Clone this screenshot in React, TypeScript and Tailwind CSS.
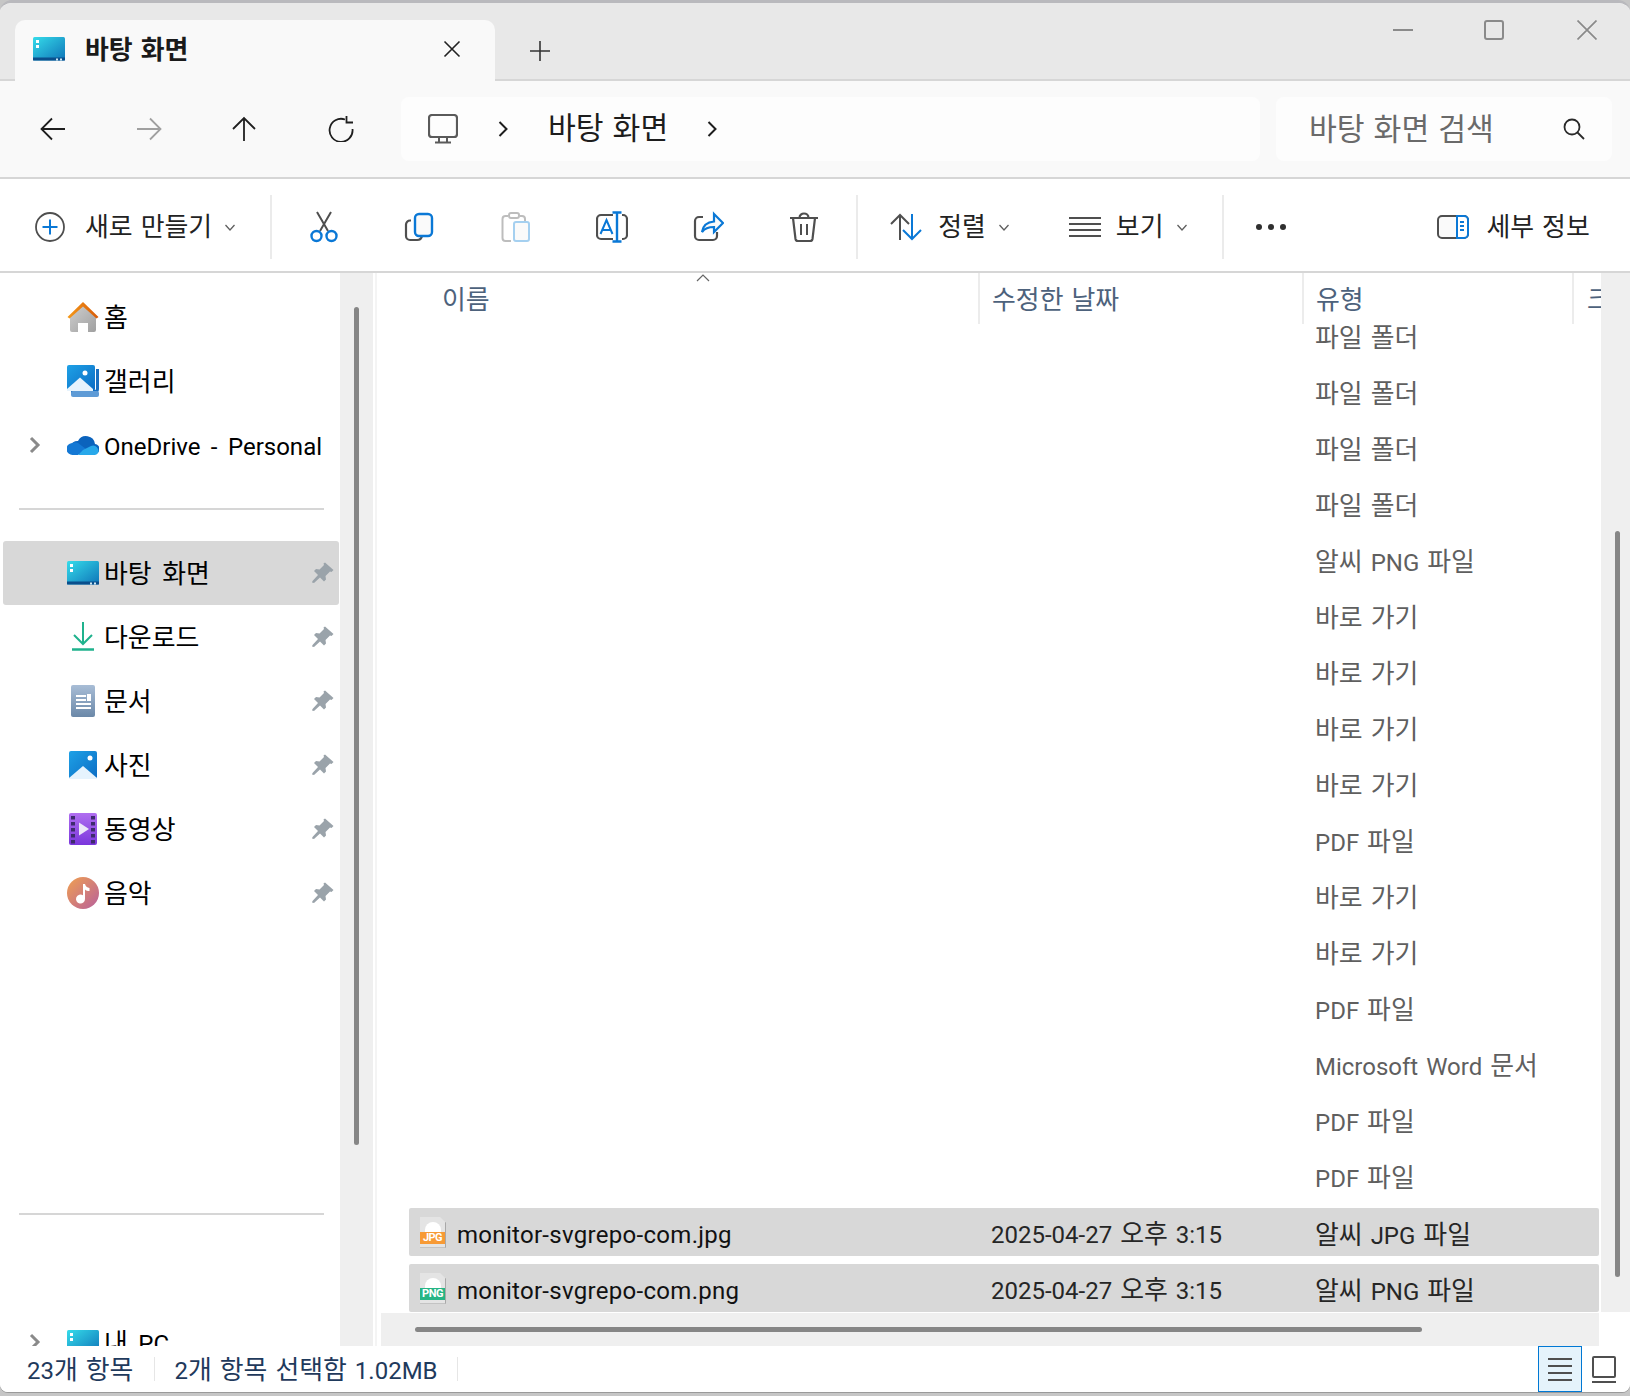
import type { ReactNode } from 'react'

const GRAY = '#4f4f4f'
const BLUE = '#0a78d6'

// hangul runs a little bigger than the latin next to them
function T({ children }: { children: string }) {
  return (
    <>
      {children.split(/([가-힣]+)/).map((part, i) =>
        i % 2 ? <span key={i} className="text-[1.08em]">{part}</span> : part
      )}
    </>
  )
}

function Svg({ size = 32, children, className = '' }: { size?: number; children: ReactNode; className?: string }) {
  return (
    <svg width={size} height={size} viewBox="0 0 32 32" fill="none" className={`shrink-0 ${className}`}>
      {children}
    </svg>
  )
}

function DesktopIcon({ id }: { id: string }) {
  return (
    <svg width="32" height="24" viewBox="0 0 32 24" className="shrink-0">
      <defs>
        <linearGradient id={id} x1="0" y1="0" x2="1" y2="1">
          <stop offset="0" stopColor="#35dcea" />
          <stop offset="1" stopColor="#0f74b8" />
        </linearGradient>
      </defs>
      <rect width="32" height="23.5" rx="1.5" fill={`url(#${id})`} />
      <rect y="20.5" width="32" height="3" fill="#0a4f8c" />
      <rect x="3" y="3" width="3" height="3" fill="#fff" />
      <rect x="3" y="8" width="3" height="3" fill="#fff" />
      <rect x="23" y="21.5" width="2" height="2" fill="#cfe9f5" />
      <rect x="27" y="21.5" width="2" height="2" fill="#cfe9f5" />
    </svg>
  )
}

function HomeIcon() {
  return (
    <svg width="32" height="32" viewBox="0 0 32 32" className="shrink-0">
      <defs>
        <linearGradient id="homeBody" x1="0" y1="0" x2="1" y2="1">
          <stop offset="0" stopColor="#cfcfcf" />
          <stop offset="1" stopColor="#a0a0a0" />
        </linearGradient>
        <linearGradient id="homeRoof" x1="0" y1="0" x2="1" y2="0">
          <stop offset="0" stopColor="#f59a1a" />
          <stop offset="1" stopColor="#d85a08" />
        </linearGradient>
      </defs>
      <path d="M3 15 16 4l13 11v14a2 2 0 0 1-2 2h-6v-9h-10v9H5a2 2 0 0 1-2-2z" fill="url(#homeBody)" />
      <path d="M0.5 16 16 1l15.500 15-2 1.500L16 5.500 2.500 17.500z" fill="url(#homeRoof)" />
    </svg>
  )
}

function GalleryIcon() {
  return (
    <svg width="32" height="32" viewBox="0 0 32 32" className="shrink-0">
      <path d="M4 28h24a4 4 0 0 0 4-4V4h-3v20a1 1 0 0 1-1 1H4z" fill="#1a6fc0" />
      <rect x="4" y="26" width="28" height="6" rx="2" fill="#5e9bd6" />
      <defs>
        <linearGradient id="galBg" x1="0" y1="0" x2="1" y2="1">
          <stop offset="0" stopColor="#1ea1e6" />
          <stop offset="1" stopColor="#0c6cc4" />
        </linearGradient>
      </defs>
      <rect width="28" height="26" rx="2" fill="url(#galBg)" />
      <circle cx="18" cy="8" r="2.500" fill="#fff" />
      <path d="M0 24 13 12.500 26 24v2H0z" fill="#e6f3fd" />
    </svg>
  )
}

function CloudIcon() {
  return (
    <svg width="32" height="22" viewBox="0 0 32 22" className="shrink-0">
      <path d="M7 20h20a5 5 0 0 0 1-10 9 9 0 0 0-17-3 7 7 0 0 0-4 13z" fill="#0b63bd" />
      <path d="M6 21a6 6 0 0 1-1-12 7 7 0 0 1 6 0l8 6-8 6z" fill="#1478d4" />
      <path d="M11 21h17a4 4 0 0 0 3-6 5 5 0 0 0-7-3l-8 4z" fill="#28a8ea" />
    </svg>
  )
}

function DownloadIcon() {
  return (
    <Svg>
      <path d="M16 1v21M7 14l9 9 9-9" stroke="#1fb28d" strokeWidth="2" />
      <path d="M5 28.500h22" stroke="#1fb28d" strokeWidth="2.500" />
    </Svg>
  )
}

function DocumentIcon() {
  return (
    <svg width="32" height="32" viewBox="0 0 32 32" className="shrink-0">
      <defs>
        <linearGradient id="docBg" x1="0" y1="0" x2="0" y2="1">
          <stop offset="0" stopColor="#a8bdd6" />
          <stop offset="1" stopColor="#6b88a8" />
        </linearGradient>
      </defs>
      <rect x="4" width="24" height="32" rx="2" fill="url(#docBg)" />
      <rect x="9" y="10" width="10" height="2" fill="#fff" />
      <rect x="9" y="14" width="10" height="2" fill="#fff" />
      <rect x="20" y="9" width="4" height="7" fill="#fff" />
      <rect x="9" y="18" width="15" height="2" fill="#fff" />
      <rect x="9" y="22" width="15" height="2" fill="#fff" />
    </svg>
  )
}

function PictureIcon() {
  return (
    <svg width="32" height="32" viewBox="0 0 32 32" className="shrink-0">
      <defs>
        <linearGradient id="picBg" x1="0" y1="0" x2="1" y2="1">
          <stop offset="0" stopColor="#1ea1e6" />
          <stop offset="1" stopColor="#0c6cc4" />
        </linearGradient>
      </defs>
      <rect x="2" y="2" width="28" height="28" rx="2" fill="url(#picBg)" />
      <circle cx="23" cy="9" r="2.500" fill="#fff" />
      <path d="M2 29 16 17l14 12v1H2z" fill="#e6f3fd" />
    </svg>
  )
}

function VideoIcon() {
  return (
    <svg width="32" height="32" viewBox="0 0 32 32" className="shrink-0">
      <defs>
        <linearGradient id="vidBg" x1="0" y1="0" x2="0" y2="1">
          <stop offset="0" stopColor="#b06ef0" />
          <stop offset="1" stopColor="#7a36dc" />
        </linearGradient>
      </defs>
      <rect x="2" width="28" height="32" rx="2" fill="url(#vidBg)" />
      {[3, 9, 15, 21, 27].map(y => (
        <g key={y}>
          <rect x="4" y={y} width="4" height="3.500" fill="#3e2a6e" />
          <rect x="24" y={y} width="4" height="3.500" fill="#3e2a6e" />
        </g>
      ))}
      <path d="M12 9.500v13l10-6.500z" fill="#ece6f8" />
    </svg>
  )
}

function MusicIcon() {
  return (
    <svg width="32" height="32" viewBox="0 0 32 32" className="shrink-0">
      <defs>
        <linearGradient id="musBg" x1="0" y1="0" x2="1" y2="1">
          <stop offset="0" stopColor="#f0a050" />
          <stop offset="1" stopColor="#b8609c" />
        </linearGradient>
      </defs>
      <circle cx="16" cy="16" r="16" fill="url(#musBg)" />
      <path d="M16 7h2c.5 2.500 2 3.500 4.500 4v3c-2 0-3.500-.5-4.500-1.500V22a4.500 4.500 0 1 1-2-3.700z" fill="#fff" />
    </svg>
  )
}

function PinIcon() {
  return (
    <svg width="22" height="22" viewBox="0 0 22 22" className="shrink-0">
      <path d="M13 0.500 21.500 8l-2 2-1.500-.5-4.500 4.500.5 3.500-2 2-4-4L2 21l-2-.5.5-1.500 5.500-6-4-4 2-2 3.500.5 4.500-4.500-.5-1.500z" fill="#9aa3aa" />
    </svg>
  )
}

function Chevron({ size = 14, color = '#5f5f5f' }: { size?: number; color?: string }) {
  return (
    <svg width={size} height={size} viewBox="0 0 14 14" fill="none" className="shrink-0">
      <path d="M2.500 5 7 10l4.500-5" stroke={color} strokeWidth="1.300" />
    </svg>
  )
}

function RightChevron({ className = '' }: { className?: string }) {
  return (
    <svg width="12" height="20" viewBox="0 0 12 20" fill="none" className={`shrink-0 ${className}`}>
      <path d="M2.500 3 9.500 10l-7 7" stroke="#1d1d1d" strokeWidth="2" />
    </svg>
  )
}

function NavRow({ icon, label, chevron, pin, active }: { icon: ReactNode; label: string; chevron?: boolean; pin?: boolean; active?: boolean }) {
  return (
    <div className={`h-[64px] ml-[3px] w-[336px] flex items-center rounded-[3px] shrink-0 ${active ? 'bg-[#d8d8d8]' : ''}`}>
      <div className="w-[64px] flex justify-center shrink-0">
        {chevron && (
          <svg width="12" height="18" viewBox="0 0 12 18" fill="none" className="ml-[-1px]">
            <path d="M2 2l7 7-7 7" stroke="#8a8a8a" strokeWidth="3" />
          </svg>
        )}
      </div>
      <div className="w-[32px] flex justify-center shrink-0">{icon}</div>
      <span className="ml-[5px] pt-[4px] text-[24px] leading-none text-black whitespace-nowrap [word-spacing:4.5px]"><T>{label}</T></span>
      {pin && <span className="ml-auto mr-[5px]"><PinIcon /></span>}
    </div>
  )
}

function FileIcon({ label, color }: { label: string; color: string }) {
  return (
    <div className="relative w-[26px] h-[31px] shrink-0 bg-[#e4e4e4] border-r border-b border-[#a8a8a8] overflow-hidden [clip-path:polygon(0_0,75%_0,100%_20%,100%_100%,0_100%)]">
      <div className="w-[16px] h-[18px] bg-white rounded-t-full mx-auto mt-[5px]" />
      <div className={`absolute left-0 right-0 top-[15px] h-[12px] text-center text-[11px] leading-[12px] tracking-[-0.5px] font-bold text-white ${color}`}>{label}</div>
    </div>
  )
}

const types = [
  '파일 폴더', '파일 폴더', '파일 폴더', '파일 폴더', '알씨 PNG 파일', '바로 가기', '바로 가기', '바로 가기',
  '바로 가기', 'PDF 파일', '바로 가기', '바로 가기', 'PDF 파일', 'Microsoft Word 문서', 'PDF 파일', 'PDF 파일',
]

function SelectedRow({ name, type, icon }: { name: string; type: string; icon: ReactNode }) {
  return (
    <div className="h-[48px] shrink-0 bg-[#d8d8d8] rounded-[2px] grid grid-cols-[570px_324px_1fr] items-center text-[24px] leading-none whitespace-nowrap text-[#262626]">
      <div className="flex items-center pl-[11px] gap-[11px] text-[#111]">
        {icon}
        <span className="pt-[5px] tracking-[0.3px]">{name}</span>
      </div>
      <div className="pl-[12px] pt-[5px]"><T>2025-04-27 오후 3:15</T></div>
      <div className="pl-[12px] pt-[7px]"><T>{type}</T></div>
    </div>
  )
}

export default function App() {
  return (
    <div className="w-[1630px] h-[1396px] bg-[#c6c6c6] overflow-hidden font-['Roboto','Noto_Sans_CJK_KR',sans-serif] [word-spacing:2px]">
      <div className="h-[1392px] bg-white rounded-t-[12px] rounded-b-[8px] border-t-[3px] border-[#b9b9bd] flex flex-col overflow-hidden shadow-[0_1px_0_#9a9a9a]">
        {/* tab strip */}
        <div className="h-[78px] shrink-0 bg-[#e8e8e8] border-b-2 border-[#d6d6d6] flex items-end pl-[15px] relative">
          <div className="w-[480px] h-[61px] mb-[-2px] bg-[#f9f9f9] rounded-t-[10px] flex items-center pl-[18px] pr-[34px] pb-[4px]">
            <DesktopIcon id="tabDesk" />
            <span className="ml-[20px] pt-[4px] text-[24px] leading-none font-bold text-[#1a1a1a]"><T>바탕 화면</T></span>
            <svg width="18" height="18" viewBox="0 0 18 18" fill="none" className="ml-auto">
              <path d="M1.500 1.500l15 15m0-15l-15 15" stroke="#222" strokeWidth="1.600" />
            </svg>
          </div>
          <svg width="20" height="20" viewBox="0 0 20 20" fill="none" className="ml-[35px] mb-[18px]">
            <path d="M10 0v20M0 10h20" stroke="#333" strokeWidth="1.600" />
          </svg>
          <div className="ml-auto self-start mt-[17px] flex items-center pr-[33px]">
            <div className="w-[20px] h-[2px] bg-[#8a8a8a]" />
            <div className="ml-[71px] w-[20px] h-[20px] border-2 border-[#8a8a8a] rounded-[3px]" />
            <svg width="20" height="20" viewBox="0 0 20 20" fill="none" className="ml-[73px]">
              <path d="M0.500 0.500l19 19m0-19l-19 19" stroke="#8a8a8a" strokeWidth="1.700" />
            </svg>
          </div>
        </div>

        {/* nav bar */}
        <div className="h-[98px] shrink-0 bg-[#f9f9f9] border-b-2 border-[#d6d6d6] flex items-center">
          <div className="w-[401px] shrink-0 flex items-center">
            <svg width="26" height="24" viewBox="0 0 26 24" fill="none" className="ml-[40px]">
              <path d="M25 12H2M12 1.500 1.500 12 12 22.500" stroke="#1f1f1f" strokeWidth="1.800" />
            </svg>
            <svg width="26" height="24" viewBox="0 0 26 24" fill="none" className="ml-[70px]">
              <path d="M1 12h23M14 1.500 24.500 12 14 22.500" stroke="#a0a0a0" strokeWidth="1.800" />
            </svg>
            <svg width="26" height="26" viewBox="0 0 26 26" fill="none" className="ml-[69px]">
              <path d="M13 25V2M2 13 13 2l11 11" stroke="#1f1f1f" strokeWidth="1.800" />
            </svg>
            <svg width="26" height="26" viewBox="0 0 26 26" fill="none" className="ml-[71px]">
              <path d="M17 3.500A11.500 11.500 0 1 0 24.500 13M18.500 0v6.500H25" stroke="#1f1f1f" strokeWidth="1.800" />
            </svg>
          </div>
          <div className="w-[859px] h-[64px] shrink-0 bg-[#fdfdfd] rounded-[8px] flex items-center pl-[27px]">
            <svg width="30" height="30" viewBox="0 0 30 30" fill="none" className="shrink-0">
              <rect x="1" y="1" width="28" height="22" rx="3" stroke="#5a5a5a" strokeWidth="2.200" />
              <path d="M11 24v4M19 24v4M7 28.500h16" stroke="#5a5a5a" strokeWidth="2" />
            </svg>
            <RightChevron className="ml-[39px]" />
            <span className="ml-[39px] pt-[1px] text-[28px] leading-none text-[#1d1d1d] whitespace-nowrap"><T>바탕 화면</T></span>
            <RightChevron className="ml-[38px]" />
          </div>
          <div className="ml-[16px] w-[336px] h-[64px] shrink-0 bg-[#fdfdfd] rounded-[8px] flex items-center pl-[33px] pr-[27px]">
            <span className="pt-[2px] text-[28px] leading-none text-[#6a6a6a] whitespace-nowrap"><T>바탕 화면 검색</T></span>
            <svg width="22" height="22" viewBox="0 0 22 22" fill="none" className="ml-auto">
              <circle cx="9" cy="9" r="7.500" stroke="#2a2a2a" strokeWidth="1.800" />
              <path d="M14.500 14.500 21 21" stroke="#2a2a2a" strokeWidth="1.800" />
            </svg>
          </div>
        </div>

        {/* command bar */}
        <div className="h-[94px] shrink-0 bg-white border-b-2 border-[#d6d6d6] pt-[3px] flex items-center text-[24px] text-[#222] whitespace-nowrap">
          <svg width="30" height="30" viewBox="0 0 30 30" fill="none" className="ml-[35px] shrink-0">
            <circle cx="15" cy="15" r="14" stroke="#4f4f4f" strokeWidth="1.800" />
            <path d="M15 7.500v15M7.500 15h15" stroke={BLUE} strokeWidth="2" />
          </svg>
          <span className="ml-[20px] pt-[3px] leading-none"><T>새로 만들기</T></span>
          <span className="ml-[11px]"><Chevron /></span>
          <div className="ml-[33px] w-[2px] h-[64px] bg-[#ebebeb] shrink-0" />
          <div className="flex items-center">
            <Svg className="ml-[36px]">
              <path d="M9 1l11 19M23 1 12 20" stroke={GRAY} strokeWidth="2" />
              <circle cx="8.500" cy="25" r="5" stroke={BLUE} strokeWidth="2.400" />
              <circle cx="23.500" cy="25" r="5" stroke={BLUE} strokeWidth="2.400" />
            </Svg>
            <Svg className="ml-[64px]">
              <path d="M7 9.500H6a4 4 0 0 0-4 4V25a4 4 0 0 0 4 4h7a5 5 0 0 0 5-4" stroke={GRAY} strokeWidth="2.200" />
              <rect x="11" y="3" width="17" height="22" rx="4" fill="#fafafa" stroke={BLUE} strokeWidth="2.400" />
            </Svg>
            <Svg className="ml-[64px]">
              <path d="M8 5H5.500a3 3 0 0 0-3 3v19a3 3 0 0 0 3 3H11M20 5h2a3 3 0 0 1 3 3v2" stroke="#bdbdbd" strokeWidth="2" />
              <rect x="9" y="2" width="10" height="5" rx="2" stroke="#bdbdbd" strokeWidth="2" />
              <rect x="14" y="11" width="15" height="19" rx="2" fill="#fafafa" stroke="#a5d0f0" strokeWidth="2" />
            </Svg>
            <Svg className="ml-[64px]">
              <path d="M17 4H5a4 4 0 0 0-4 4v16a4 4 0 0 0 4 4h12M26 4h1a4 4 0 0 1 4 4v16a4 4 0 0 1-4 4h-1" stroke={GRAY} strokeWidth="2.200" />
              <path d="M21 1v30M16.500 1.500h9M16.500 30.500h9" stroke={BLUE} strokeWidth="2.400" />
              <path d="M4.500 23 10.500 9l6 14M6.500 19h8" stroke={BLUE} strokeWidth="2" />
            </Svg>
            <Svg className="ml-[64px]">
              <path d="M11 6H7a4 4 0 0 0-4 4v15a4 4 0 0 0 4 4h14a4 4 0 0 0 4-4v-4" stroke={GRAY} strokeWidth="2.200" />
              <path d="M22 3l9 9-9 9v-5c-5 0-9 1-12 5 1-7 6-10 12-10.500z" fill="#fafafa" stroke={BLUE} strokeWidth="2.200" />
            </Svg>
            <Svg className="ml-[64px]">
              <path d="M2 7h28M11.500 7c0-6 9-6 9 0M5 7l2.500 21a2.500 2.500 0 0 0 2.500 2h12a2.500 2.500 0 0 0 2.500-2L27 7" stroke={GRAY} strokeWidth="2.200" />
              <path d="M13 13v11M19 13v11" stroke={GRAY} strokeWidth="2" />
            </Svg>
          </div>
          <div className="ml-[36px] w-[2px] h-[64px] bg-[#ebebeb] shrink-0" />
          <svg width="34" height="28" viewBox="0 0 34 28" fill="none" className="ml-[32px] shrink-0">
            <path d="M10 27V2M1 11l9-9 9 9" stroke={GRAY} strokeWidth="2" />
            <path d="M22 1v25M13 17l9 9 9-9" stroke={BLUE} strokeWidth="2" />
          </svg>
          <span className="ml-[14px] pt-[3px] leading-none"><T>정렬</T></span>
          <span className="ml-[11px]"><Chevron /></span>
          <div className="ml-[58px] w-[32px] flex flex-col gap-[4px] shrink-0">
            <div className="h-[2px] bg-[#4f4f4f]" />
            <div className="h-[2px] bg-[#4f4f4f]" />
            <div className="h-[2px] bg-[#4f4f4f]" />
            <div className="h-[2px] bg-[#4f4f4f]" />
          </div>
          <span className="ml-[15px] pt-[3px] leading-none"><T>보기</T></span>
          <span className="ml-[12px]"><Chevron /></span>
          <div className="ml-[33px] w-[2px] h-[64px] bg-[#ebebeb] shrink-0" />
          <div className="ml-[32px] flex gap-[6px] shrink-0">
            <div className="w-[6px] h-[6px] rounded-full bg-[#2f2f2f]" />
            <div className="w-[6px] h-[6px] rounded-full bg-[#2f2f2f]" />
            <div className="w-[6px] h-[6px] rounded-full bg-[#2f2f2f]" />
          </div>
          <svg width="32" height="24" viewBox="0 0 32 24" fill="none" className="ml-[151px] shrink-0">
            <rect x="1" y="1" width="30" height="22" rx="4" fill="#fafafa" stroke={GRAY} strokeWidth="2" />
            <path d="M20 1h7a4 4 0 0 1 4 4v14a4 4 0 0 1-4 4h-7z" fill="#fff" stroke={BLUE} strokeWidth="2" />
            <path d="M23 7h4M23 11h4M23 15h4" stroke={BLUE} strokeWidth="2" />
          </svg>
          <span className="ml-[17px] pt-[3px] leading-none"><T>세부 정보</T></span>
        </div>

        {/* body */}
        <div className="h-[1073px] shrink-0 flex overflow-hidden">
          <div className="w-[340px] shrink-0 pt-[12px] flex flex-col overflow-hidden">
            <NavRow icon={<HomeIcon />} label="홈" />
            <NavRow icon={<GalleryIcon />} label="갤러리" />
            <NavRow icon={<CloudIcon />} label="OneDrive - Personal" chevron />
            <div className="h-[2px] shrink-0 bg-[#d6d6d6] ml-[19px] w-[305px] mt-[31px] mb-[31px]" />
            <NavRow icon={<DesktopIcon id="navDesk" />} label="바탕 화면" pin active />
            <NavRow icon={<DownloadIcon />} label="다운로드" pin />
            <NavRow icon={<DocumentIcon />} label="문서" pin />
            <NavRow icon={<PictureIcon />} label="사진" pin />
            <NavRow icon={<VideoIcon />} label="동영상" pin />
            <NavRow icon={<MusicIcon />} label="음악" pin />
            <div className="h-[2px] shrink-0 bg-[#d6d6d6] ml-[19px] w-[305px] mt-[288px] mb-[95px]" />
            <NavRow icon={<DesktopIcon id="pcDesk" />} label="내 PC" chevron />
          </div>
          <div className="w-[33px] shrink-0 bg-[#efefef] pl-[14px] pt-[34px]">
            <div className="w-[5px] h-[838px] bg-[#868686] rounded-[3px]" />
          </div>
          <div className="w-[5px] shrink-0 bg-white pl-[2px]">
            <div className="w-[2px] h-full bg-[#f4f4f4]" />
          </div>

          <div className="flex-1 min-w-0 flex flex-col">
            <div className="h-[1039px] shrink-0 flex">
              <div className="flex-1 min-w-0 flex flex-col">
                <div className="h-[51px] shrink-0 bg-white relative z-10 flex text-[24px] leading-none text-[#4d627c] whitespace-nowrap">
                  <div className="w-[600px] shrink-0 pl-[64px] pt-[15px] relative">
                    <T>이름</T>
                    <svg width="14" height="8" viewBox="0 0 14 8" fill="none" className="absolute left-[318px] top-[1px]">
                      <path d="M1 7l6-6 6 6" stroke="#666" strokeWidth="1.200" />
                    </svg>
                  </div>
                  <div className="w-[324px] shrink-0 pl-[12px] pt-[15px] border-l-2 border-[#ececec]"><T>수정한 날짜</T></div>
                  <div className="w-[270px] shrink-0 pl-[12px] pt-[15px] border-l-2 border-[#ececec]"><T>유형</T></div>
                  <div className="w-[29px] shrink-0 pl-[13px] pt-[15px] border-l-2 border-[#ececec] overflow-hidden"><T>크기</T></div>
                </div>
                <div className="flex-1 min-h-0 overflow-hidden">
                  <div className="-mt-[12px] pl-[31px] pr-[2px] flex flex-col gap-[8px]">
                    {types.map((t, i) => (
                      <div key={i} className="h-[48px] shrink-0 pl-[906px] pt-[6px] flex items-center text-[24px] leading-none text-[#5f5f5f] whitespace-nowrap">
                        <span><T>{t}</T></span>
                      </div>
                    ))}
                    <SelectedRow name="monitor-svgrepo-com.jpg" type="알씨 JPG 파일" icon={<FileIcon label="JPG" color="bg-[#f79a35]" />} />
                    <SelectedRow name="monitor-svgrepo-com.png" type="알씨 PNG 파일" icon={<FileIcon label="PNG" color="bg-[#27b585]" />} />
                  </div>
                </div>
              </div>
              <div className="w-[29px] shrink-0 bg-[#efefef] pl-[14px] pt-[258px]">
                <div className="w-[5px] h-[746px] bg-[#868686] rounded-[3px]" />
              </div>
            </div>
            <div className="h-[1px] shrink-0" />
            <div className="h-[33px] shrink-0 flex">
              <div className="ml-[3px] w-[1218px] bg-[#efefef] pl-[34px] pt-[14px]">
                <div className="w-[1007px] h-[5px] bg-[#868686] rounded-[3px]" />
              </div>
            </div>
          </div>
        </div>

        {/* status bar */}
        <div className="flex-1 min-h-0 bg-white flex items-center text-[24px] leading-none text-[#1f3a5c] whitespace-nowrap">
          <span className="ml-[27px] pt-[4px]"><T>23개 항목</T></span>
          <div className="ml-[21px] w-[1px] h-[24px] bg-[#e6e6e6]" />
          <span className="ml-[19px] pt-[4px]"><T>2개 항목 선택함 1.02MB</T></span>
          <div className="ml-[19px] w-[1px] h-[24px] bg-[#e6e6e6]" />
          <div className="ml-auto w-[44px] h-full bg-[#e5f3fb] border border-[#0078d4] flex flex-col items-center justify-center gap-[5px]">
            <div className="w-[24px] h-[2px] bg-[#4f4f4f]" />
            <div className="w-[24px] h-[2px] bg-[#4f4f4f]" />
            <div className="w-[24px] h-[2px] bg-[#4f4f4f]" />
            <div className="w-[24px] h-[2px] bg-[#4f4f4f]" />
          </div>
          <div className="ml-[10px] mr-[14px] w-[24px] flex flex-col">
            <div className="h-[22px] border-2 border-[#4f4f4f] rounded-[2px]" />
            <div className="h-[2px] mt-[3px] bg-[#4f4f4f]" />
          </div>
        </div>
      </div>
    </div>
  )
}
